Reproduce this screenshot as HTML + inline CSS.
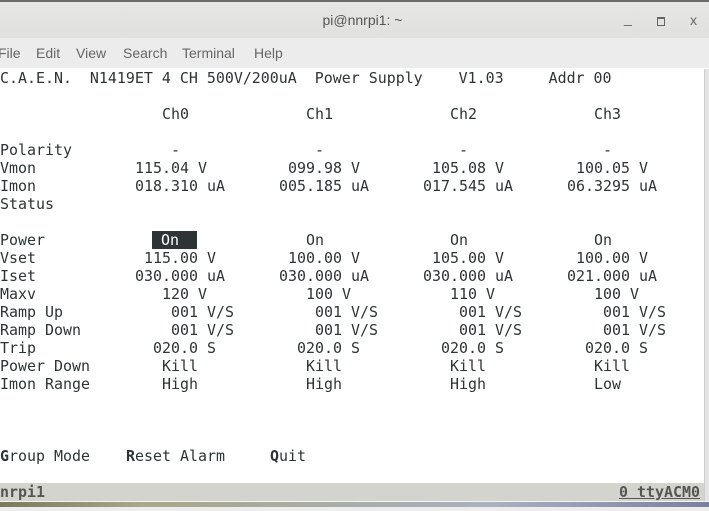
<!DOCTYPE html>
<html><head><meta charset="utf-8"><style>
body{margin:0;width:709px;height:511px;overflow:hidden;background:#fff;font-family:"Liberation Sans",sans-serif;position:relative}
#tb{position:absolute;left:0;top:0;width:709px;height:38px;background:linear-gradient(#e6e6e5,#e0e0df);border-top:2px solid #6b6b6b;box-sizing:border-box}
#tb .t{position:absolute;left:0;width:725px;text-align:center;top:10px;font-size:14px;color:#555}
#menu{position:absolute;left:0;top:38px;width:709px;height:30px;background:#ececec;font-size:14px;color:#666}
#menu span{position:absolute;top:7px}
#term{position:absolute;left:0;top:69px;width:704px;height:414px;font-family:"DejaVu Sans Mono","Liberation Mono",monospace;font-size:14.95px;color:#2e3436}
#term div{position:absolute;height:18px;line-height:18px;white-space:pre}
#sb{position:absolute;left:0;top:483px;width:704px;height:18px;background:#d3d4cd;font-family:"DejaVu Sans Mono",monospace;font-size:14.95px;line-height:18px;font-weight:bold;color:#555}
#bot{position:absolute;left:0;top:501px;width:709px;height:1px;background:#f4f4f4}
#bot1{position:absolute;left:0;top:502px;width:709px;height:5px;background:linear-gradient(90deg,#7a7a5a,#a8a88a 20%,#aab0c0 70%,#7a80a0)}
#bot2{position:absolute;left:0;top:507px;width:709px;height:4px;background:#ededed}
#scr{position:absolute;left:704px;top:69px;width:5px;height:432px;background:#e4e4e4;border-left:1px solid #ccc}
</style></head><body>
<div id="tb"><div class="t">pi@nnrpi1: ~</div>
<span style="position:absolute;left:624px;top:8px;font-size:14px;color:#666">_</span>
<span style="position:absolute;left:657px;top:15px;width:6px;height:6px;border:1px solid #666;border-top-width:2px"></span>
<span style="position:absolute;left:690px;top:10px;font-size:14px;color:#666">x</span>
</div>
<div id="menu"><span style="left:-2px">File</span><span style="left:36px">Edit</span><span style="left:76px">View</span><span style="left:123px">Search</span><span style="left:182px">Terminal</span><span style="left:254px">Help</span></div>
<div id="scr"></div>
<div id="term">
<div style="top:0;left:0">C.A.E.N.  N1419ET 4 CH 500V/200uA  Power Supply    V1.03     Addr 00</div>
<div style="top:36px;left:162px">Ch0</div><div style="top:36px;left:306px">Ch1</div><div style="top:36px;left:450px">Ch2</div><div style="top:36px;left:594px">Ch3</div>
<div style="top:72px;left:0">Polarity</div><div style="top:72px;left:171px">-</div><div style="top:72px;left:315px">-</div><div style="top:72px;left:459px">-</div><div style="top:72px;left:603px">-</div>
<div style="top:90px;left:0">Vmon</div><div style="top:90px;left:135px">115.04 V</div><div style="top:90px;left:288px">099.98 V</div><div style="top:90px;left:432px">105.08 V</div><div style="top:90px;left:576px">100.05 V</div>
<div style="top:108px;left:0">Imon</div><div style="top:108px;left:135px">018.310 uA</div><div style="top:108px;left:279px">005.185 uA</div><div style="top:108px;left:423px">017.545 uA</div><div style="top:108px;left:567px">06.3295 uA</div>
<div style="top:126px;left:0">Status</div>
<div style="top:162px;left:0">Power</div><div style="top:162px;left:152px;width:45px;background:#2e3436;color:#fff"> On</div><div style="top:162px;left:306px">On</div><div style="top:162px;left:450px">On</div><div style="top:162px;left:594px">On</div>
<div style="top:180px;left:0">Vset</div><div style="top:180px;left:144px">115.00 V</div><div style="top:180px;left:288px">100.00 V</div><div style="top:180px;left:432px">105.00 V</div><div style="top:180px;left:576px">100.00 V</div>
<div style="top:198px;left:0">Iset</div><div style="top:198px;left:135px">030.000 uA</div><div style="top:198px;left:279px">030.000 uA</div><div style="top:198px;left:423px">030.000 uA</div><div style="top:198px;left:567px">021.000 uA</div>
<div style="top:216px;left:0">Maxv</div><div style="top:216px;left:162px">120 V</div><div style="top:216px;left:306px">100 V</div><div style="top:216px;left:450px">110 V</div><div style="top:216px;left:594px">100 V</div>
<div style="top:234px;left:0">Ramp Up</div><div style="top:234px;left:171px">001 V/S</div><div style="top:234px;left:315px">001 V/S</div><div style="top:234px;left:459px">001 V/S</div><div style="top:234px;left:603px">001 V/S</div>
<div style="top:252px;left:0">Ramp Down</div><div style="top:252px;left:171px">001 V/S</div><div style="top:252px;left:315px">001 V/S</div><div style="top:252px;left:459px">001 V/S</div><div style="top:252px;left:603px">001 V/S</div>
<div style="top:270px;left:0">Trip</div><div style="top:270px;left:153px">020.0 S</div><div style="top:270px;left:297px">020.0 S</div><div style="top:270px;left:441px">020.0 S</div><div style="top:270px;left:585px">020.0 S</div>
<div style="top:288px;left:0">Power Down</div><div style="top:288px;left:162px">Kill</div><div style="top:288px;left:306px">Kill</div><div style="top:288px;left:450px">Kill</div><div style="top:288px;left:594px">Kill</div>
<div style="top:306px;left:0">Imon Range</div><div style="top:306px;left:162px">High</div><div style="top:306px;left:306px">High</div><div style="top:306px;left:450px">High</div><div style="top:306px;left:594px">Low</div>
<div style="top:378px;left:0"><b>G</b>roup Mode</div><div style="top:378px;left:126px"><b>R</b>eset Alarm</div><div style="top:378px;left:270px"><b>Q</b>uit</div>
</div>
<div id="sb"><span style="position:absolute;left:0">nrpi1</span><span style="position:absolute;right:4px;text-decoration:underline">0 ttyACM0</span></div>
<div id="bot"></div><div id="bot1"></div><div id="bot2"></div>
</body></html>
